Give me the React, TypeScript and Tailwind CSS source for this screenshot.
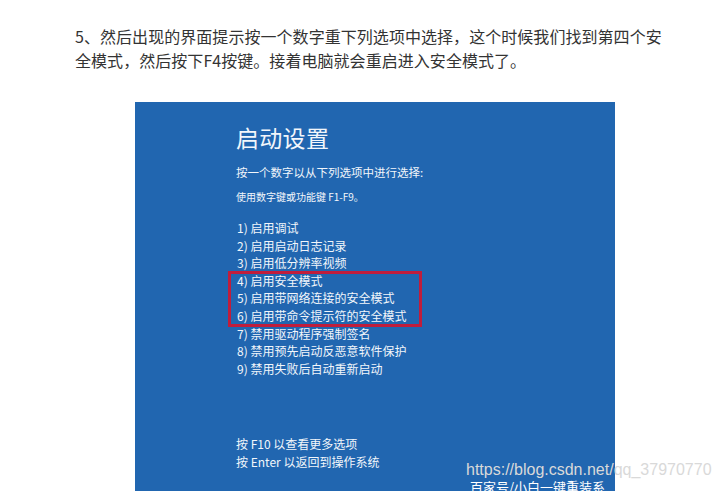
const items = [
  "1) 启用调试",
  "2) 启用启动日志记录",
  "3) 启用低分辨率视频",
];

const safeItems = [
  "4) 启用安全模式",
  "5) 启用带网络连接的安全模式",
  "6) 启用带命令提示符的安全模式",
];

const moreItems = [
  "7) 禁用驱动程序强制签名",
  "8) 禁用预先启动反恶意软件保护",
  "9) 禁用失败后自动重新启动",
];

const cjk = "font-['Noto_Sans_CJK_SC','Noto_Sans',sans-serif]";

export default function App() {
  return (
    <div className={`relative h-[491px] w-[719px] overflow-hidden bg-white ${cjk}`}>
      <p className="ml-[75px] pt-[25px] text-[16px] leading-[23.5px] tracking-[0.05px] text-[#333]">
        5、然后出现的界面提示按一个数字重下列选项中选择，这个时候我们找到第四个安
        <br />
        全模式，然后按下F4按键。接着电脑就会重启进入安全模式了。
      </p>

      <div className="relative ml-[135px] mt-[30px] h-[400px] w-[480px] bg-[#2166b0] pl-[101px] pt-[21px] text-[#f2f6fb]">
        <h1 className="text-[23px] leading-[28px] tracking-[0.3px]">启动设置</h1>
        <p className="mt-[11px] text-[11.5px] leading-[20px]">按一个数字以从下列选项中进行选择:</p>
        <p className="mt-[8px] text-[10px] leading-[14px]">使用数字键或功能键 F1-F9。</p>

        <ul className="mt-[15px] pl-[1px] text-[12px] leading-[17.6px]">
          {items.map((t) => (
            <li key={t}>{t}</li>
          ))}
          <li className="relative">
            <div className="pointer-events-none absolute -left-[9px] -top-[1px] h-[56px] w-[194px] border-[3px] border-[#c01d3c]" />
            {safeItems.map((t) => (
              <div key={t}>{t}</div>
            ))}
          </li>
          {moreItems.map((t) => (
            <li key={t}>{t}</li>
          ))}
        </ul>

        <div className="mt-[58px] text-[12px] leading-[18px]">
          <p>按 F10 以查看更多选项</p>
          <p>按 Enter 以返回到操作系统</p>
        </div>

        <span className="absolute left-[335px] top-[377px] text-[13px] leading-[16px] text-white">
          百家号/小白一键重装系统
        </span>
      </div>

      <span className="absolute left-[466px] top-[460px] font-['Liberation_Sans',Arial,sans-serif] text-[16px] leading-[20px] text-[#d9d9d9]">
        https://blog.csdn.net/qq_37970770
      </span>
    </div>
  );
}
